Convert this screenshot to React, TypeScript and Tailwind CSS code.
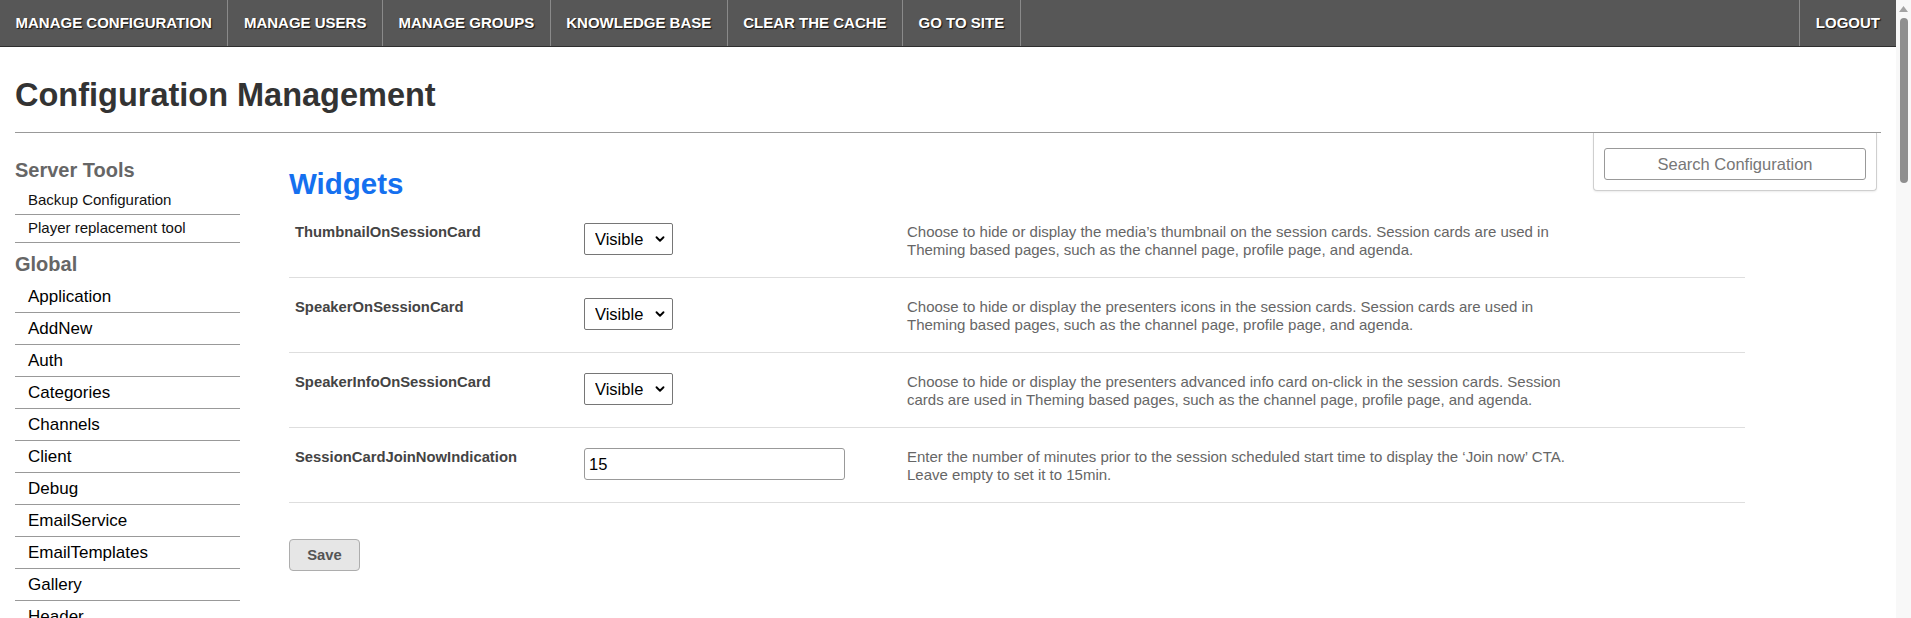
import { ChevronDown } from 'lucide-react'

const navItems = [
  'Manage Configuration',
  'Manage Users',
  'Manage Groups',
  'Knowledge Base',
  'Clear the Cache',
  'Go to Site',
]

const serverTools = ['Backup Configuration', 'Player replacement tool']

const globalItems = [
  'Application',
  'AddNew',
  'Auth',
  'Categories',
  'Channels',
  'Client',
  'Debug',
  'EmailService',
  'EmailTemplates',
  'Gallery',
  'Header',
  'Home',
]

interface Setting {
  name: string
  kind: 'select' | 'text'
  value: string
  help: React.ReactNode
}

const settings: Setting[] = [
  {
    name: 'ThumbnailOnSessionCard',
    kind: 'select',
    value: 'Visible',
    help: 'Choose to hide or display the media\u2019s thumbnail on the session cards. Session cards are used in Theming based pages, such as the channel page, profile page, and agenda.',
  },
  {
    name: 'SpeakerOnSessionCard',
    kind: 'select',
    value: 'Visible',
    help: 'Choose to hide or display the presenters icons in the session cards. Session cards are used in Theming based pages, such as the channel page, profile page, and agenda.',
  },
  {
    name: 'SpeakerInfoOnSessionCard',
    kind: 'select',
    value: 'Visible',
    help: 'Choose to hide or display the presenters advanced info card on-click in the session cards. Session cards are used in Theming based pages, such as the channel page, profile page, and agenda.',
  },
  {
    name: 'SessionCardJoinNowIndication',
    kind: 'text',
    value: '15',
    help: (
      <>
        Enter the number of minutes prior to the session scheduled start time to display the {'\u2018'}Join now{'\u2019'} CTA.
        <br />
        Leave empty to set it to 15min.
      </>
    ),
  },
]

function NavBar() {
  return (
    <nav className="flex h-[47px] bg-[#575757] border-b border-[#2f2f2f]">
      {navItems.map((item) => (
        <a
          key={item}
          href="#"
          className="flex items-center pt-[1px] px-[15.5px] border-r border-[#8a8a8a] text-white font-bold uppercase text-[15px] [text-shadow:1px_1px_1px_#111]"
        >
          {item}
        </a>
      ))}
      <div className="flex-1" />
      <a
        href="#"
        className="flex items-center pt-[1px] px-[16px] border-l border-[#8a8a8a] text-white font-bold uppercase text-[15px] [text-shadow:1px_1px_1px_#111]"
      >
        Logout
      </a>
    </nav>
  )
}

function Sidebar() {
  return (
    <aside className="w-[225px] shrink-0 pt-[25px]">
      <h3 className="text-[20px] leading-[24px] font-bold text-[#666] mb-[5px]">Server Tools</h3>
      {serverTools.map((t) => (
        <div key={t} className="h-[28px] flex items-center pl-[13px] border-b border-[#999] text-[15px] text-[#111]">
          {t}
        </div>
      ))}
      <h3 className="text-[20px] leading-[24px] font-bold text-[#666] mt-[9px] mb-[5px]">Global</h3>
      {globalItems.map((t) => (
        <div key={t} className="h-[32px] flex items-center pl-[13px] border-b border-[#999] text-[17px] text-black">
          {t}
        </div>
      ))}
    </aside>
  )
}

function SettingRow({ s }: { s: Setting }) {
  return (
    <div className="flex h-[75px] border-b border-[#dedede] pt-[20px]">
      <div className="w-[295px] shrink-0 pl-[6px] pt-[1px] text-[14.8px] leading-[17px] font-bold text-[#444]">
        {s.name}
      </div>
      <div className="w-[323px] shrink-0">
        {s.kind === 'select' ? (
          <div className="relative w-[89px] h-[32px]">
            <select
              defaultValue={s.value}
              className="appearance-none w-full h-full border border-[#767676] rounded-[2px] bg-white pl-[10px] text-[16.5px] text-black"
            >
              <option>Visible</option>
              <option>Hidden</option>
            </select>
            <ChevronDown
              className="absolute right-[6px] top-[9px] pointer-events-none text-black"
              size={14}
              strokeWidth={3.2}
            />
          </div>
        ) : (
          <input
            defaultValue={s.value}
            className="w-[261px] h-[32px] border border-[#999] rounded-[3px] px-[4px] text-[16.5px] text-black"
          />
        )}
      </div>
      <div className="w-[670px] text-[15px] leading-[18px] text-[#666]">{s.help}</div>
    </div>
  )
}

function SearchPanel() {
  return (
    <div className="w-[284px] mr-[4px] border border-t-0 border-[#cfcfcf] rounded-b-[4px] shadow-[0_1px_2px_rgba(0,0,0,0.08)] bg-white px-[10px] pt-[15px] pb-[10px]">
      <input
        placeholder="Search Configuration"
        className="w-full h-[32px] border border-[#999] rounded-[3px] text-center text-[16.5px] placeholder:text-[#777]"
      />
    </div>
  )
}

export default function App() {
  return (
    <div className="flex h-[618px] overflow-hidden bg-white font-['Liberation_Sans',Arial,sans-serif]">
      <div className="flex-1 min-w-0">
        <NavBar />
        <div className="px-[15px]">
          <h1 className="mt-[30px] mb-[18px] text-[32.5px] leading-[37px] font-bold text-[#333]">
            Configuration Management
          </h1>
          <div className="flex border-t border-[#999]">
            <Sidebar />
            <main className="flex-1 min-w-0 ml-[49px]">
              <div className="flex items-start justify-between h-[70px]">
                <h2 className="mt-[34px] text-[29.5px] leading-[34px] font-bold text-[#1570ef]">Widgets</h2>
                <SearchPanel />
              </div>
              <div className="w-[1456px]">
                {settings.map((s) => (
                  <SettingRow key={s.name} s={s} />
                ))}
              </div>
              <button className="mt-[36px] w-[71px] h-[32px] bg-[#e6e6e6] border border-[#adadad] rounded-[4px] text-[14.8px] font-bold text-[#555]">
                Save
              </button>
            </main>
          </div>
        </div>
      </div>
      <div className="w-[15px] shrink-0 bg-[#f8f8f8] flex flex-col items-center">
        <svg width="9" height="6" viewBox="0 0 9 6" className="mt-[6px]">
          <path d="M4.5 0 L9 6 L0 6 Z" fill="#a3a3a3" />
        </svg>
        <div className="mt-[6px] w-[8px] h-[165px] rounded-full bg-[#8f8f8f]" />
      </div>
    </div>
  )
}
